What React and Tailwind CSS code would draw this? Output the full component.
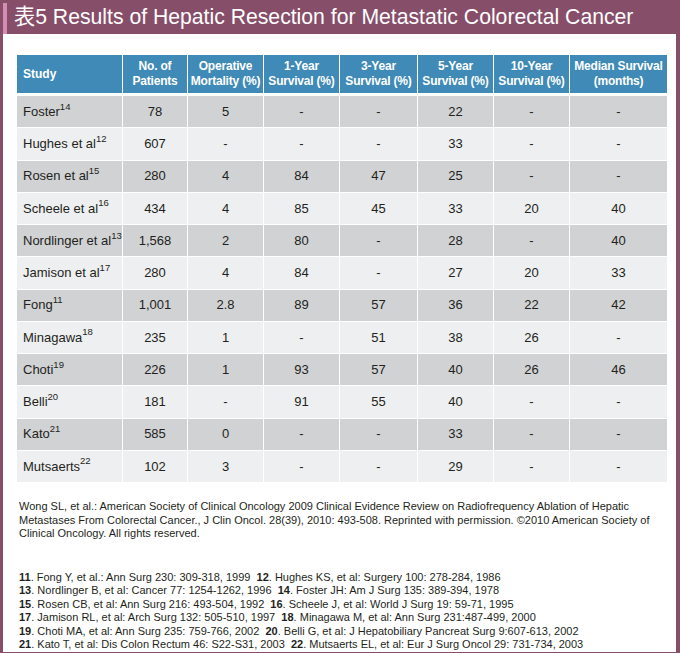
import React from "react";

const rows = [
  ["Foster", "14", "78", "5", "-", "-", "22", "-", "-"],
  ["Hughes et al", "12", "607", "-", "-", "-", "33", "-", "-"],
  ["Rosen et al", "15", "280", "4", "84", "47", "25", "-", "-"],
  ["Scheele et al", "16", "434", "4", "85", "45", "33", "20", "40"],
  ["Nordlinger et al", "13", "1,568", "2", "80", "-", "28", "-", "40"],
  ["Jamison et al", "17", "280", "4", "84", "-", "27", "20", "33"],
  ["Fong", "11", "1,001", "2.8", "89", "57", "36", "22", "42"],
  ["Minagawa", "18", "235", "1", "-", "51", "38", "26", "-"],
  ["Choti", "19", "226", "1", "93", "57", "40", "26", "46"],
  ["Belli", "20", "181", "-", "91", "55", "40", "-", "-"],
  ["Kato", "21", "585", "0", "-", "-", "33", "-", "-"],
  ["Mutsaerts", "22", "102", "3", "-", "-", "29", "-", "-"],
];

const headers = [
  ["No. of", "Patients"],
  ["Operative", "Mortality (%)"],
  ["1-Year", "Survival (%)"],
  ["3-Year", "Survival (%)"],
  ["5-Year", "Survival (%)"],
  ["10-Year", "Survival (%)"],
  ["Median Survival", "(months)"],
];

const refs = [
  [["11", ". Fong Y, et al.: Ann Surg 230: 309-318, 1999  "], ["12", ". Hughes KS, et al: Surgery 100: 278-284, 1986"]],
  [["13", ". Nordlinger B, et al: Cancer 77: 1254-1262, 1996  "], ["14", ". Foster JH: Am J Surg 135: 389-394, 1978"]],
  [["15", ". Rosen CB, et al: Ann Surg 216: 493-504, 1992  "], ["16", ". Scheele J, et al: World J Surg 19: 59-71, 1995"]],
  [["17", ". Jamison RL, et al: Arch Surg 132: 505-510, 1997  "], ["18", ". Minagawa M, et al: Ann Surg 231:487-499, 2000"]],
  [["19", ". Choti MA, et al: Ann Surg 235: 759-766, 2002  "], ["20", ". Belli G, et al: J Hepatobiliary Pancreat Surg 9:607-613, 2002"]],
  [["21", ". Kato T, et al: Dis Colon Rectum 46: S22-S31, 2003  "], ["22", ". Mutsaerts EL, et al: Eur J Surg Oncol 29: 731-734, 2003"]],
];

const cols = "grid grid-cols-[105px_64px_75px_75px_77px_75px_75px_97px] gap-x-px";

export default function App() {
  return (
    <div className="w-[680px] h-[653px] bg-[#874e6a] flex flex-col font-['Liberation_Sans','Noto_Sans_CJK_JP',Arial,sans-serif]">
      <div className="h-[34px] flex shrink-0">
        <div className="w-[4px] ml-[3px] mt-[3px] bg-[#d48db3]" />
        <div className="ml-[7px] pt-[5px] text-white text-[21.2px] leading-[24px] whitespace-nowrap">
          表5 Results of Hepatic Resection for Metastatic Colorectal Cancer
        </div>
      </div>
      <div className="flex-1 bg-white ml-[3px] mr-[4px] mb-[3px] pl-[14px] pt-[21px] text-[#231f20]">
        <div className={`${cols} bg-white h-[38px]`}>
          <div className="bg-[#3f8ab6] text-white font-bold text-[12px] flex items-center pl-[6px]">Study</div>
          {headers.map((h, i) => (
            <div key={i} className="bg-[#3f8ab6] text-white font-bold text-[12px] leading-[15px] flex flex-col items-center justify-center whitespace-nowrap tracking-[-0.2px]">
              <span>{h[0]}</span>
              <span>{h[1]}</span>
            </div>
          ))}
        </div>
        <div className={`${cols} gap-y-px mt-[3px] bg-white`}>
          {rows.map((r, ri) => {
            const bg = ri % 2 === 0 ? "bg-[#d1d2d4]" : "bg-[#eeeff0]";
            return (
              <React.Fragment key={ri}>
                <div className={`${bg} h-[31.25px] flex items-center pl-[6px] text-[13px] whitespace-nowrap`}>
                  {r[0]}
                  <sup className="text-[9.5px] -top-[5px]">{r[1]}</sup>
                </div>
                {r.slice(2).map((c, ci) => (
                  <div key={ci} className={`${bg} h-[31.25px] flex items-center justify-center text-[13px]`}>
                    {c}
                  </div>
                ))}
              </React.Fragment>
            );
          })}
        </div>
        <p className="mt-[18px] pl-[2px] pr-[16px] text-[11px] leading-[13.5px] text-[#231f20]">
          Wong SL, et al.: American Society of Clinical Oncology 2009 Clinical Evidence Review on Radiofrequency Ablation of Hepatic
          Metastases From Colorectal Cancer., J Clin Oncol. 28(39), 2010: 493-508. Reprinted with permission. ©2010 American Society of
          Clinical Oncology. All rights reserved.
        </p>
        <div className="mt-[30px] pl-[2px] text-[11px] leading-[13.6px] text-[#231f20]">
          {refs.map((line, i) => (
            <div key={i} className="whitespace-pre">
              {line.map((p, j) => (
                <React.Fragment key={j}>
                  <b>{p[0]}</b>
                  {p[1]}
                </React.Fragment>
              ))}
            </div>
          ))}
        </div>
      </div>
    </div>
  );
}
